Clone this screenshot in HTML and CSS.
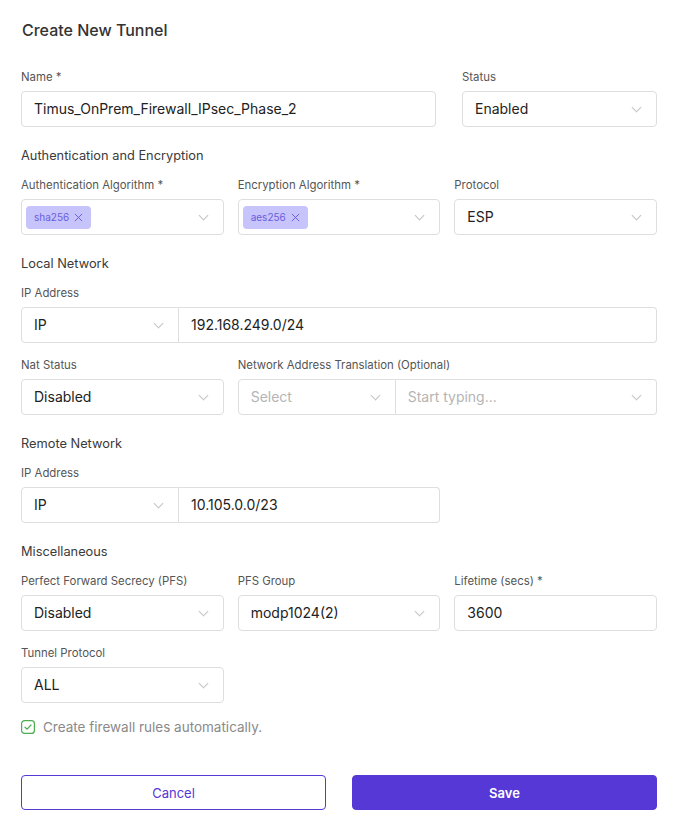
FILE: index.html
```html
<!DOCTYPE html>
<html>
<head>
<meta charset="utf-8">
<link rel="stylesheet" href="styles.css">
</head>
<body>
<div class="page">
  <h1 class="title">Create New Tunnel</h1>

  <div class="row row-name">
    <div class="field">
      <label class="lbl">Name *</label>
      <div class="box"><span class="val">Timus_OnPrem_Firewall_IPsec_Phase_2</span></div>
    </div>
    <div class="field">
      <label class="lbl">Status</label>
      <div class="box sel"><span class="val">Enabled</span><span class="chev"></span></div>
    </div>
  </div>

  <h2 class="section">Authentication and Encryption</h2>
  <div class="row row-3 first">
    <div class="field">
      <label class="lbl">Authentication Algorithm *</label>
      <div class="box sel tagbox"><span class="tag">sha256 <span class="x"><svg viewBox="0 0 10 10" width="9" height="9"><path d="M1 1L9 9M9 1L1 9" stroke="#6a5de0" stroke-width="1.1" fill="none"/></svg></span></span><span class="chev"></span></div>
    </div>
    <div class="field">
      <label class="lbl">Encryption Algorithm *</label>
      <div class="box sel tagbox"><span class="tag">aes256 <span class="x"><svg viewBox="0 0 10 10" width="9" height="9"><path d="M1 1L9 9M9 1L1 9" stroke="#6a5de0" stroke-width="1.1" fill="none"/></svg></span></span><span class="chev"></span></div>
    </div>
    <div class="field">
      <label class="lbl">Protocol</label>
      <div class="box sel"><span class="val">ESP</span><span class="chev"></span></div>
    </div>
  </div>

  <h2 class="section">Local Network</h2>
  <div class="row first">
    <div class="field">
      <label class="lbl">IP Address</label>
      <div class="combo">
        <div class="box sel pre"><span class="val">IP</span><span class="chev"></span></div>
        <div class="box post"><span class="val">192.168.249.0/24</span></div>
      </div>
    </div>
  </div>
  <div class="row row-3">
    <div class="field">
      <label class="lbl">Nat Status</label>
      <div class="box sel"><span class="val">Disabled</span><span class="chev"></span></div>
    </div>
    <div class="field span2">
      <label class="lbl">Network Address Translation (Optional)</label>
      <div class="combo">
        <div class="box sel pre"><span class="val ph">Select</span><span class="chev"></span></div>
        <div class="box sel post"><span class="val ph">Start typing...</span><span class="chev"></span></div>
      </div>
    </div>
  </div>

  <h2 class="section">Remote Network</h2>
  <div class="row row-3 first">
    <div class="field span2">
      <label class="lbl">IP Address</label>
      <div class="combo">
        <div class="box sel pre"><span class="val">IP</span><span class="chev"></span></div>
        <div class="box post"><span class="val">10.105.0.0/23</span></div>
      </div>
    </div>
  </div>

  <h2 class="section">Miscellaneous</h2>
  <div class="row row-3 first">
    <div class="field">
      <label class="lbl">Perfect Forward Secrecy (PFS)</label>
      <div class="box sel"><span class="val">Disabled</span><span class="chev"></span></div>
    </div>
    <div class="field">
      <label class="lbl">PFS Group</label>
      <div class="box sel"><span class="val">modp1024(2)</span><span class="chev"></span></div>
    </div>
    <div class="field">
      <label class="lbl">Lifetime (secs) *</label>
      <div class="box"><span class="val">3600</span></div>
    </div>
  </div>
  <div class="row row-3">
    <div class="field">
      <label class="lbl">Tunnel Protocol</label>
      <div class="box sel"><span class="val">ALL</span><span class="chev"></span></div>
    </div>
  </div>

  <div class="check">
    <span class="cb"><svg viewBox="0 0 14 14" width="14" height="14"><rect x="0.6" y="0.6" width="12.8" height="12.8" rx="3" fill="none" stroke="#4cae4f" stroke-width="1.2"/><path d="M4 7.2L6.1 9.2L10 5" fill="none" stroke="#4cae4f" stroke-width="1.2" stroke-linecap="round" stroke-linejoin="round"/></svg></span>
    <span class="check-text">Create firewall rules automatically.</span>
  </div>

  <div class="actions">
    <button class="btn cancel">Cancel</button>
    <button class="btn save">Save</button>
  </div>
</div>
</body>
</html>
```

FILE: styles.css
```css
* { box-sizing: border-box; }
html, body { margin: 0; padding: 0; background: #fff; }
body {
  font-family: "Inter", "Noto Sans", sans-serif;
  color: #222;
}
.page {
  width: 674px;
  padding: 20px 17px 0 21px;
}
.title {
  margin: 0;
  font-size: 16px;
  line-height: 20px;
  font-weight: 500;
  color: #333;
  padding-left: 1px;
}
.row { display: grid; gap: 14px; margin-top: 14px; }
.row-name { grid-template-columns: 1fr 195px; column-gap: 26px; margin-top: 29px; }
.row-3 { grid-template-columns: 1fr 1fr 1fr; }
.row.first { margin-top: 12px; }
.span2 { grid-column: span 2; }
.field { display: flex; flex-direction: column; min-width: 0; }
.lbl {
  font-size: 11.4px;
  line-height: 16px;
  color: #555;
  margin-bottom: 6px;
}
.section {
  margin: 20px 0 0 0;
  font-size: 12.8px;
  line-height: 18px;
  font-weight: 400;
  color: #3a3a3a;
}
.box {
  height: 36px;
  border: 1px solid #dedede;
  border-radius: 4px;
  display: flex;
  align-items: center;
  padding: 0 12px 2px 12px;
  position: relative;
  background: #fff;
}
.val { font-size: 14px; color: #222; white-space: nowrap; }
.val.ph { color: #b5b5b5; }
.sel { justify-content: space-between; }
.chev {
  width: 7px; height: 7px;
  border-right: 1px solid #c4c4c4;
  border-bottom: 1px solid #c4c4c4;
  transform: rotate(45deg);
  margin-top: -2px;
  margin-right: 4px;
  flex: none;
}
.tagbox { padding-left: 4px; padding-bottom: 0; }
.tagbox .chev { margin-top: -4px; }
.tag {
  display: inline-flex;
  align-items: center;
  gap: 5px;
  height: 23px;
  padding: 0 8px;
  background: #c6c4fa;
  border-radius: 4px;
  color: #6a5de0;
  font-size: 10px;
}
.x { display: inline-flex; }
.combo { display: flex; }
.combo .pre {
  width: 158px;
  flex: none;
  border-radius: 4px 0 0 4px;
}
.combo .post {
  flex: 1;
  border-left: none;
  border-radius: 0 4px 4px 0;
}
.check {
  display: flex;
  align-items: center;
  gap: 8px;
  margin-top: 16px;
}
.cb { display: inline-flex; }
.check-text { font-size: 13.5px; color: #8a8a8a; }
.actions {
  display: grid;
  grid-template-columns: 1fr 1fr;
  column-gap: 26px;
  margin-top: 40px;
}
.btn {
  height: 35px;
  border-radius: 4px;
  font-family: inherit;
  font-size: 13px;
  cursor: pointer;
}
.cancel { background: #fff; border: 1px solid #5538d6; color: #5538d6; }
.save { background: #5538d6; border: 1px solid #5538d6; color: #fff; font-weight: 600; }
```
